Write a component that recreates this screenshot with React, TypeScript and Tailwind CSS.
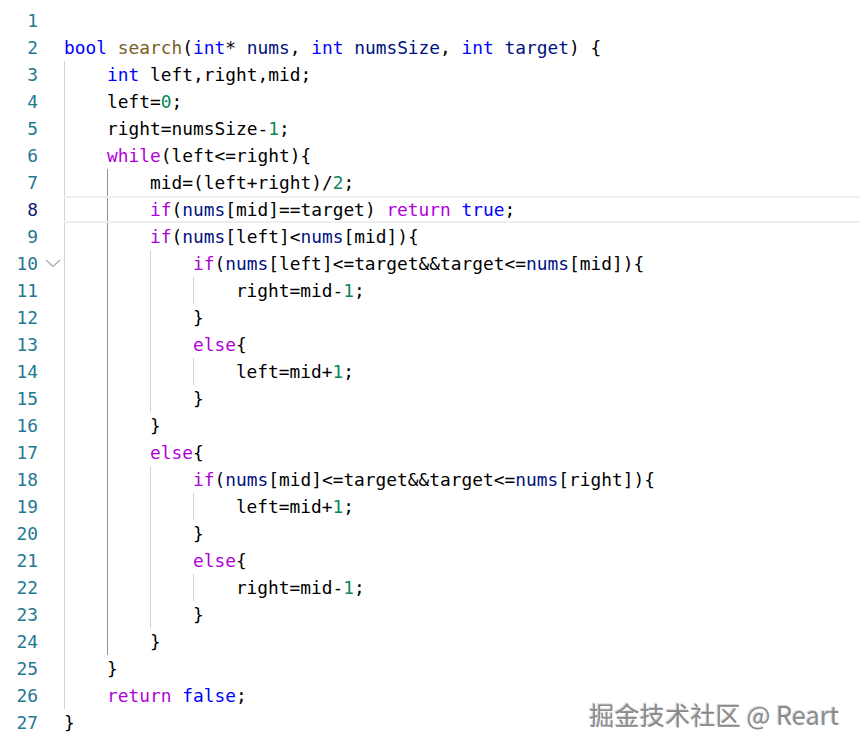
const code = [
  "",
  "bool search(int* nums, int numsSize, int target) {",
  "    int left,right,mid;",
  "    left=0;",
  "    right=numsSize-1;",
  "    while(left<=right){",
  "        mid=(left+right)/2;",
  "        if(nums[mid]==target) return true;",
  "        if(nums[left]<nums[mid]){",
  "            if(nums[left]<=target&&target<=nums[mid]){",
  "                right=mid-1;",
  "            }",
  "            else{",
  "                left=mid+1;",
  "            }",
  "        }",
  "        else{",
  "            if(nums[mid]<=target&&target<=nums[right]){",
  "                left=mid+1;",
  "            }",
  "            else{",
  "                right=mid-1;",
  "            }",
  "        }",
  "    }",
  "    return false;",
  "}",
];

const TYPES = ["bool", "int", "true", "false"];
const CONTROL = ["while", "if", "else", "return"];

const ACTIVE_LINE = 8;
const FOLD_LINE = 10;

// colour for one token; params only get the navy colour on the signature line
function tokenClass(tok: string, lineNo: number) {
  if (TYPES.includes(tok)) return "text-[#0000ff]";
  if (CONTROL.includes(tok)) return "text-[#af00db]";
  if (tok === "search") return "text-[#795e26]";
  if (tok === "nums") return "text-[#001080]";
  if (lineNo === 2 && (tok === "numsSize" || tok === "target"))
    return "text-[#001080]";
  if (/^\d+$/.test(tok)) return "text-[#098658]";
  return "text-black";
}

const CodeLine = ({ text, lineNo }: { text: string; lineNo: number }) => {
  const indent = text.match(/^ */)?.[0].length ?? 0;
  const levels = Math.floor(indent / 4);
  const rest = text.slice(levels * 4);
  const tokens = rest.match(/[A-Za-z_]\w*|\d+|\s+|./g) ?? [];
  const isActive = lineNo === ACTIVE_LINE;

  return (
    <div className="flex h-[27px]">
      {/* gutter */}
      <div
        className={`w-[38px] text-right leading-[27px] ${
          isActive ? "text-[#0b216f]" : "text-[#237893]"
        }`}
      >
        {lineNo}
      </div>
      <div className="flex w-[26px] items-center justify-center">
        {lineNo === FOLD_LINE && (
          <svg width="16" height="9" viewBox="0 0 16 9" className="ml-[4px]">
            <polyline
              points="1,1 8,7.5 15,1"
              fill="none"
              stroke="#a8a8a8"
              strokeWidth="1.2"
            />
          </svg>
        )}
      </div>

      {/* code */}
      <div
        className={`flex flex-1 items-stretch whitespace-pre ${
          isActive ? "border-y-2 border-[#eeeeee]" : ""
        }`}
      >
        {Array.from({ length: levels }).map((_, i) => {
          const activeGuide = i === 1 && lineNo >= 7 && lineNo <= 24;
          return (
            <span
              key={i}
              className={`inline-block w-[4ch] border-l ${
                activeGuide ? "border-[#939393]" : "border-[#d3d3d3]"
              }`}
            />
          );
        })}
        <span className={isActive ? "leading-[23px]" : "leading-[27px]"}>
          {tokens.map((tok, i) => (
            <span key={i} className={tokenClass(tok, lineNo)}>
              {tok}
            </span>
          ))}
        </span>
      </div>
    </div>
  );
};

export default function App() {
  return (
    <div className="relative h-[753px] w-[860px] overflow-hidden bg-white">
      <div className="pt-[7px] font-['DejaVu_Sans_Mono',monospace] text-[17.85px]">
        {code.map((line, i) => (
          <CodeLine key={i} text={line} lineNo={i + 1} />
        ))}
      </div>

      {/* watermark */}
      <div className="absolute left-[589px] top-[702px] font-['Noto_Sans_CJK_SC',sans-serif] text-[25.3px] leading-none text-[#8a8a8a] [text-shadow:1px_1px_1px_rgba(255,255,255,0.95),-1px_-1px_1px_rgba(0,0,0,0.18)]">
        掘金技术社区 @ Reart
      </div>
    </div>
  );
}
